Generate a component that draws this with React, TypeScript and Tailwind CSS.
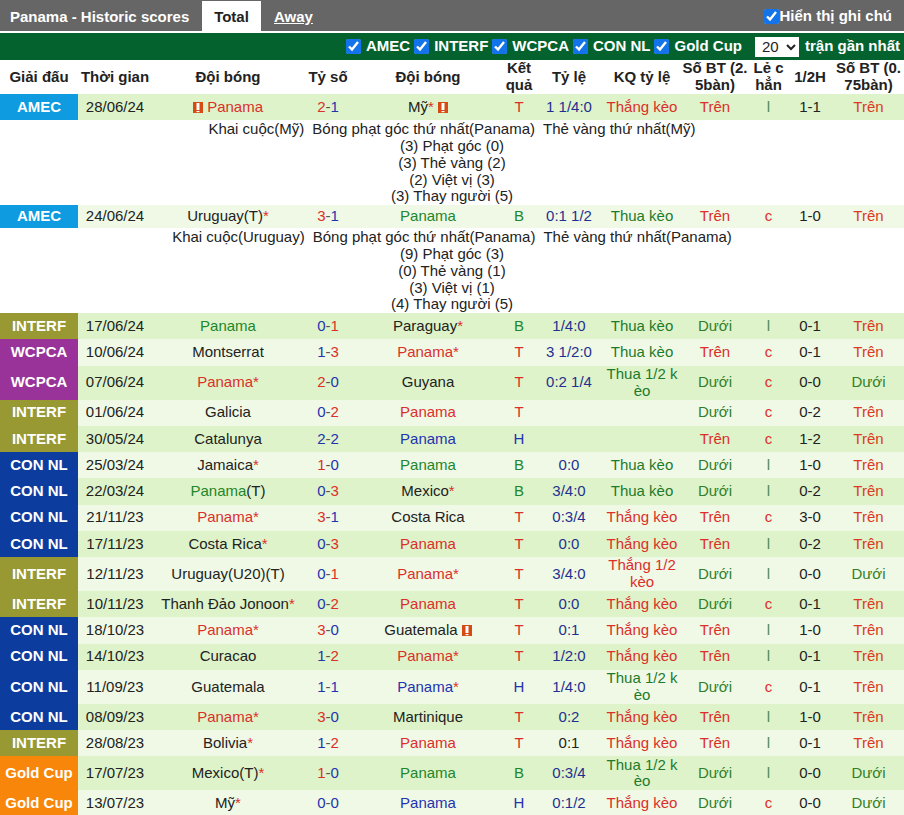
const F = "font-['Liberation_Sans',Arial,sans-serif]";

type Row = {
  l: string; d: string; a: string; s: string; b: string; r: string; o?: string; k?: string;
  bt: string; lc: string; h: string; bt2: string; fa?: boolean; fb?: boolean; blackOdds?: boolean; note?: string[];
};

const rows: Row[] = [
  { l: "AMEC", d: "28/06/24", a: "Panama", fa: true, s: "2-1", b: "Mỹ*", fb: true, r: "T", o: "1 1/4:0", k: "Thắng kèo", bt: "Trên", lc: "l", h: "1-1", bt2: "Trên",
    note: ["Khai cuộc(Mỹ)", "Bóng phạt góc thứ nhất(Panama)", "Thẻ vàng thứ nhất(Mỹ)", "(3) Phạt góc (0)", "(3) Thẻ vàng (2)", "(2) Việt vị (3)", "(3) Thay người (5)"] },
  { l: "AMEC", d: "24/06/24", a: "Uruguay(T)*", s: "3-1", b: "Panama", r: "B", o: "0:1 1/2", k: "Thua kèo", bt: "Trên", lc: "c", h: "1-0", bt2: "Trên",
    note: ["Khai cuộc(Uruguay)", "Bóng phạt góc thứ nhất(Panama)", "Thẻ vàng thứ nhất(Panama)", "(9) Phạt góc (3)", "(0) Thẻ vàng (1)", "(3) Việt vị (1)", "(4) Thay người (5)"] },
  { l: "INTERF", d: "17/06/24", a: "Panama", s: "0-1", b: "Paraguay*", r: "B", o: "1/4:0", k: "Thua kèo", bt: "Dưới", lc: "l", h: "0-1", bt2: "Trên" },
  { l: "WCPCA", d: "10/06/24", a: "Montserrat", s: "1-3", b: "Panama*", r: "T", o: "3 1/2:0", k: "Thua kèo", bt: "Trên", lc: "c", h: "0-1", bt2: "Trên" },
  { l: "WCPCA", d: "07/06/24", a: "Panama*", s: "2-0", b: "Guyana", r: "T", o: "0:2 1/4", k: "Thua 1/2 k|èo", bt: "Dưới", lc: "c", h: "0-0", bt2: "Dưới" },
  { l: "INTERF", d: "01/06/24", a: "Galicia", s: "0-2", b: "Panama", r: "T", bt: "Dưới", lc: "c", h: "0-2", bt2: "Trên" },
  { l: "INTERF", d: "30/05/24", a: "Catalunya", s: "2-2", b: "Panama", r: "H", bt: "Trên", lc: "c", h: "1-2", bt2: "Trên" },
  { l: "CON NL", d: "25/03/24", a: "Jamaica*", s: "1-0", b: "Panama", r: "B", o: "0:0", k: "Thua kèo", bt: "Dưới", lc: "l", h: "1-0", bt2: "Trên" },
  { l: "CON NL", d: "22/03/24", a: "Panama(T)", s: "0-3", b: "Mexico*", r: "B", o: "3/4:0", k: "Thua kèo", bt: "Dưới", lc: "l", h: "0-2", bt2: "Trên" },
  { l: "CON NL", d: "21/11/23", a: "Panama*", s: "3-1", b: "Costa Rica", r: "T", o: "0:3/4", k: "Thắng kèo", bt: "Trên", lc: "c", h: "3-0", bt2: "Trên" },
  { l: "CON NL", d: "17/11/23", a: "Costa Rica*", s: "0-3", b: "Panama", r: "T", o: "0:0", k: "Thắng kèo", bt: "Trên", lc: "l", h: "0-2", bt2: "Trên" },
  { l: "INTERF", d: "12/11/23", a: "Uruguay(U20)(T)", s: "0-1", b: "Panama*", r: "T", o: "3/4:0", k: "Thắng 1/2|kèo", bt: "Dưới", lc: "l", h: "0-0", bt2: "Dưới" },
  { l: "INTERF", d: "10/11/23", a: "Thanh Đảo Jonoon*", s: "0-2", b: "Panama", r: "T", o: "0:0", k: "Thắng kèo", bt: "Dưới", lc: "c", h: "0-1", bt2: "Trên" },
  { l: "CON NL", d: "18/10/23", a: "Panama*", s: "3-0", b: "Guatemala", fb: true, r: "T", o: "0:1", k: "Thắng kèo", bt: "Trên", lc: "l", h: "1-0", bt2: "Trên" },
  { l: "CON NL", d: "14/10/23", a: "Curacao", s: "1-2", b: "Panama*", r: "T", o: "1/2:0", k: "Thắng kèo", bt: "Trên", lc: "l", h: "0-1", bt2: "Trên" },
  { l: "CON NL", d: "11/09/23", a: "Guatemala", s: "1-1", b: "Panama*", r: "H", o: "1/4:0", k: "Thua 1/2 k|èo", bt: "Dưới", lc: "c", h: "0-1", bt2: "Trên" },
  { l: "CON NL", d: "08/09/23", a: "Panama*", s: "3-0", b: "Martinique", r: "T", o: "0:2", k: "Thắng kèo", bt: "Trên", lc: "l", h: "1-0", bt2: "Trên" },
  { l: "INTERF", d: "28/08/23", a: "Bolivia*", s: "1-2", b: "Panama", r: "T", o: "0:1", blackOdds: true, k: "Thắng kèo", bt: "Trên", lc: "l", h: "0-1", bt2: "Trên" },
  { l: "Gold Cup", d: "17/07/23", a: "Mexico(T)*", s: "1-0", b: "Panama", r: "B", o: "0:3/4", k: "Thua 1/2 k|èo", bt: "Dưới", lc: "l", h: "0-0", bt2: "Dưới" },
  { l: "Gold Cup", d: "13/07/23", a: "Mỹ*", s: "0-0", b: "Panama", r: "H", o: "0:1/2", k: "Thắng kèo", bt: "Dưới", lc: "c", h: "0-0", bt2: "Dưới" },
];

const leagueBg: Record<string, string> = {
  AMEC: "bg-[#0f9be0]",
  INTERF: "bg-[#999933]",
  WCPCA: "bg-[#993399]",
  "CON NL": "bg-[#0c3c9e]",
  "Gold Cup": "bg-[#f8860a]",
};

const RED = "text-[#dc2f2a]";
const GREEN = "text-[#22862a]";
const BLUE = "text-[#2333b0]";
const DARK = "text-[#222222]";

function resultColor(r: string) {
  return r === "T" ? RED : r === "B" ? GREEN : BLUE;
}

function CardIcon() {
  return (
    <svg width="10" height="11" viewBox="0 0 10 11" className="inline-block align-[-1px]">
      <rect width="10" height="11" fill="#d64a14" />
      <rect x="3.5" y="1" width="3" height="7" fill="#ffffff" />
      <rect x="3.5" y="9" width="3" height="1.2" fill="#ffffff" />
    </svg>
  );
}

function Team({ name, result, flag, side }: { name: string; result: string; flag?: boolean; side: "a" | "b" }) {
  const m = name.match(/^(.*?)((?:\(.*\))?)(\*?)$/);
  const base = m ? m[1] : name;
  const suffix = m ? m[2] : "";
  const star = m ? m[3] : "";
  const isPanama = base === "Panama";
  return (
    <>
      {flag && side === "a" && (
        <>
          <CardIcon />{" "}
        </>
      )}
      <span className={isPanama ? resultColor(result) : DARK}>{base}</span>
      {suffix && <span className={DARK}>{suffix}</span>}
      {star && <span className={RED}>{star}</span>}
      {flag && side === "b" && (
        <>
          {" "}
          <CardIcon />
        </>
      )}
    </>
  );
}

function Score({ s }: { s: string }) {
  const [x, y] = s.split("-");
  const cx = +x > +y ? RED : BLUE;
  const cy = +y > +x ? RED : BLUE;
  return (
    <>
      <span className={cx}>{x}</span>
      <span className="text-[#555555]">-</span>
      <span className={cy}>{y}</span>
    </>
  );
}

function Lines({ t }: { t: string }) {
  const p = t.split("|");
  return (
    <>
      {p[0]}
      {p[1] && <br />}
      {p[1]}
    </>
  );
}

function Check() {
  return <input type="checkbox" defaultChecked className="w-[15px] h-[15px] m-0 accent-[#1273eb]" />;
}

const filters = ["AMEC", "INTERF", "WCPCA", "CON NL", "Gold Cup"];

export default function App() {
  return (
    <div className={`${F} w-[904px] h-[815px] overflow-hidden bg-white text-[15px] leading-[16.8px] text-[#222222]`}>
      <div className="h-[31px] bg-[#666666] flex items-end pl-[10px] pr-[12px] text-white font-bold">
        <div className="w-[192px] h-[30px] leading-[31px]">Panama - Historic scores</div>
        <div className="w-[59px] h-[30px] leading-[31px] bg-white text-[#222222] text-center">Total</div>
        <div className="ml-[13px] h-[30px] leading-[31px] underline">Away</div>
        <div className="ml-auto h-[30px] flex items-center gap-[1px]">
          <Check />
          <span>Hiển thị ghi chú</span>
        </div>
      </div>
      <div className="h-[2px] bg-white" />
      <div className="h-[27px] bg-[#04622f] flex items-center justify-end pr-[4px] text-white font-bold">
        {filters.map((f) => (
          <label key={f} className="flex items-center gap-[5px] mr-[4px]">
            <Check />
            <span>{f}</span>
          </label>
        ))}
        <select defaultValue="20" className="ml-[9px] mr-[6px] w-[44px] h-[20px] bg-white text-[#222222] text-[15px] font-normal pl-[3px]">
          <option value="20">20</option>
        </select>
        <span>trận gần nhất</span>
      </div>
      <table className="w-[904px] table-fixed border-collapse text-center">
        <colgroup>
          <col className="w-[78px]" />
          <col className="w-[74px]" />
          <col className="w-[152px]" />
          <col className="w-[48px]" />
          <col className="w-[152px]" />
          <col className="w-[30px]" />
          <col className="w-[70px]" />
          <col className="w-[76px]" />
          <col className="w-[70px]" />
          <col className="w-[37px]" />
          <col className="w-[46px]" />
          <col className="w-[71px]" />
        </colgroup>
        <thead>
          <tr className="h-[34px] font-bold whitespace-nowrap">
            <th className="p-0">Giải đấu</th>
            <th className="p-0">Thời gian</th>
            <th className="p-0">Đội bóng</th>
            <th className="p-0">Tỷ số</th>
            <th className="p-0">Đội bóng</th>
            <th className="p-0">Kết<br />quả</th>
            <th className="p-0">Tỷ lệ</th>
            <th className="p-0">KQ tỷ lệ</th>
            <th className="p-0">Số BT (2.<br />5bàn)</th>
            <th className="p-0">Lẻ c<br />hẳn</th>
            <th className="p-0">1/2H</th>
            <th className="p-0">Số BT (0.<br />75bàn)</th>
          </tr>
        </thead>
        <tbody>
          {rows.flatMap((r, i) => {
            const bg = i % 2 === 0 ? "bg-[#def3c9]" : "bg-[#eff9e6]";
            const rowH = i === 1 ? "h-[23px]" : r.k?.includes("|") ? "h-[34px]" : "h-[26.25px]";
            const main = (
              <tr key={r.d} className={`${rowH} ${bg}`}>
                <td className={`p-0 font-bold text-white ${leagueBg[r.l]}`}>{r.l}</td>
                <td className="p-0">{r.d}</td>
                <td className="p-0 whitespace-nowrap"><Team name={r.a} result={r.r} flag={r.fa} side="a" /></td>
                <td className="p-0"><Score s={r.s} /></td>
                <td className="p-0 whitespace-nowrap"><Team name={r.b} result={r.r} flag={r.fb} side="b" /></td>
                <td className={`p-0 ${resultColor(r.r)}`}>{r.r}</td>
                <td className={`p-0 whitespace-nowrap ${r.blackOdds ? DARK : "text-[#1f3090]"}`}>{r.o}</td>
                <td className={`p-0 whitespace-nowrap ${r.k?.startsWith("Thắng") ? RED : "text-[#1f7a2c]"}`}>
                  {r.k && <Lines t={r.k} />}
                </td>
                <td className={`p-0 ${r.bt === "Trên" ? RED : "text-[#33802a]"}`}>{r.bt}</td>
                <td className={`p-0 ${r.lc === "c" ? RED : "text-[#4f8a4f]"}`}>{r.lc}</td>
                <td className="p-0">{r.h}</td>
                <td className={`p-0 ${r.bt2 === "Trên" ? "text-[#dd3a22]" : "text-[#33802a]"}`}>{r.bt2}</td>
              </tr>
            );
            if (!r.note) return [main];
            const note = (
              <tr key={r.d + "n"} className="bg-white">
                <td colSpan={12} className="p-0 pt-px">
                  <div className="flex justify-center gap-[8px]">
                    <span>{r.note[0]}</span>
                    <span>{r.note[1]}</span>
                    <span>{r.note[2]}</span>
                  </div>
                  {r.note.slice(3).map((t) => (
                    <div key={t}>{t}</div>
                  ))}
                </td>
              </tr>
            );
            return [main, note];
          })}
        </tbody>
      </table>
    </div>
  );
}
